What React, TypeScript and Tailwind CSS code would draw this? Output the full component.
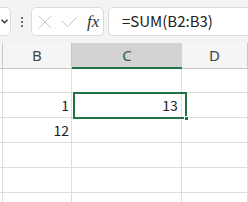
import React from "react";

const cjk = { fontFamily: '"Noto Sans CJK JP", "Noto Sans", sans-serif' };

function Toolbar() {
  return (
    <div className="flex h-[43px] items-center bg-[#f3f3f3]">
      {/* name box tail */}
      <div className="flex h-[29px] w-[11px] items-center justify-start rounded-r-[5px] border border-l-0 border-[#dcdcdc] bg-white pl-[1px]">
        <svg width="7" height="5" viewBox="0 0 7 5" className="text-[#333]">
          <path d="M0.5 0.8 L3.5 3.8 L6.5 0.8" fill="none" stroke="currentColor" strokeWidth="1.3" />
        </svg>
      </div>
      {/* splitter dots */}
      <div className="ml-[9px] flex w-[3px] flex-col items-center gap-[2px]">
        <span className="h-[2px] w-[2px] rounded-full bg-[#444]" />
        <span className="h-[2px] w-[2px] rounded-full bg-[#444]" />
        <span className="h-[2px] w-[2px] rounded-full bg-[#444]" />
      </div>
      {/* cancel / enter / fx */}
      <div className="ml-[8px] flex h-[29px] w-[73px] items-center rounded-[5px] border border-[#dcdcdc] bg-white">
        <svg width="14" height="14" viewBox="0 0 14 14" className="ml-[6px] text-[#c4c4c4]">
          <path d="M1 1 L13 13 M13 1 L1 13" fill="none" stroke="currentColor" strokeWidth="1" />
        </svg>
        <svg width="17" height="12" viewBox="0 0 17 12" className="ml-[9px] text-[#c4c4c4]">
          <path d="M1 5 L6.5 10.5 L16 1" fill="none" stroke="currentColor" strokeWidth="1" />
        </svg>
        <span
          className="ml-[9px] text-[17px] italic leading-none text-[#333]"
          style={{ fontFamily: '"Liberation Serif", serif' }}
        >
          fx
        </span>
      </div>
      {/* formula input */}
      <div
        className="ml-[4px] flex h-[29px] flex-1 items-center rounded-l-[5px] border border-r-0 border-[#dcdcdc] bg-white pl-[13px] text-[15px] text-[#222]"
        style={cjk}
      >
        =SUM(B2:B3)
      </div>
    </div>
  );
}

function Header() {
  const hd = { fontFamily: '"Noto Sans", "Open Sans", sans-serif' };
  return (
    <div className="flex h-[26px] text-[15px] text-[#444]" style={hd}>
      <div className="w-[3px] border-r border-b border-[#c8c8c8] bg-[#f5f5f5]" />
      <div className="flex w-[71px] items-center justify-center border-r border-b border-[#c8c8c8] bg-[#f5f5f5]">
        B
      </div>
      <div className="flex w-[113px] items-center justify-center border-b-2 border-[#217346] bg-[#d3d3d3] text-[#3a5a48]">
        C
      </div>
      <div className="flex w-[68px] items-center justify-center border-r border-b border-[#c8c8c8] bg-[#f5f5f5]">
        D
      </div>
      <div className="flex-1 border-b border-[#c8c8c8] bg-[#f5f5f5]" />
    </div>
  );
}

function Row({ h, b, c }: { h: string; b?: string; c?: string }) {
  return (
    <div className={`flex ${h} text-[14px] text-[#222]`} style={cjk}>
      <div className="w-[3px] border-r border-b border-[#dedede]" />
      <div className="flex w-[71px] items-center justify-end border-r border-b border-[#dedede] pr-[2px]">
        {b}
      </div>
      <div className="flex w-[113px] items-center justify-end border-r border-b border-[#dedede] pr-[3px]">
        {c}
      </div>
      <div className="w-[68px] border-r border-b border-[#dedede]" />
      <div className="flex-1 border-b border-[#dedede]" />
    </div>
  );
}

export default function App() {
  return (
    <div className="relative h-[202px] w-[248px] overflow-hidden bg-white">
      <Toolbar />
      <Header />
      <Row h="h-[24px]" />
      <Row h="h-[25px]" b="1" c="13" />
      <Row h="h-[25px]" b="12" />
      <Row h="h-[25px]" />
      <Row h="h-[25px]" />
      <Row h="h-[25px]" />
      {/* active cell */}
      <div className="absolute left-[73px] top-[92px] h-[27px] w-[114px] border-2 border-[#217346]" />
      <div className="absolute left-[184px] top-[116px] h-[5px] w-[5px] border border-white bg-[#217346]" />
    </div>
  );
}
